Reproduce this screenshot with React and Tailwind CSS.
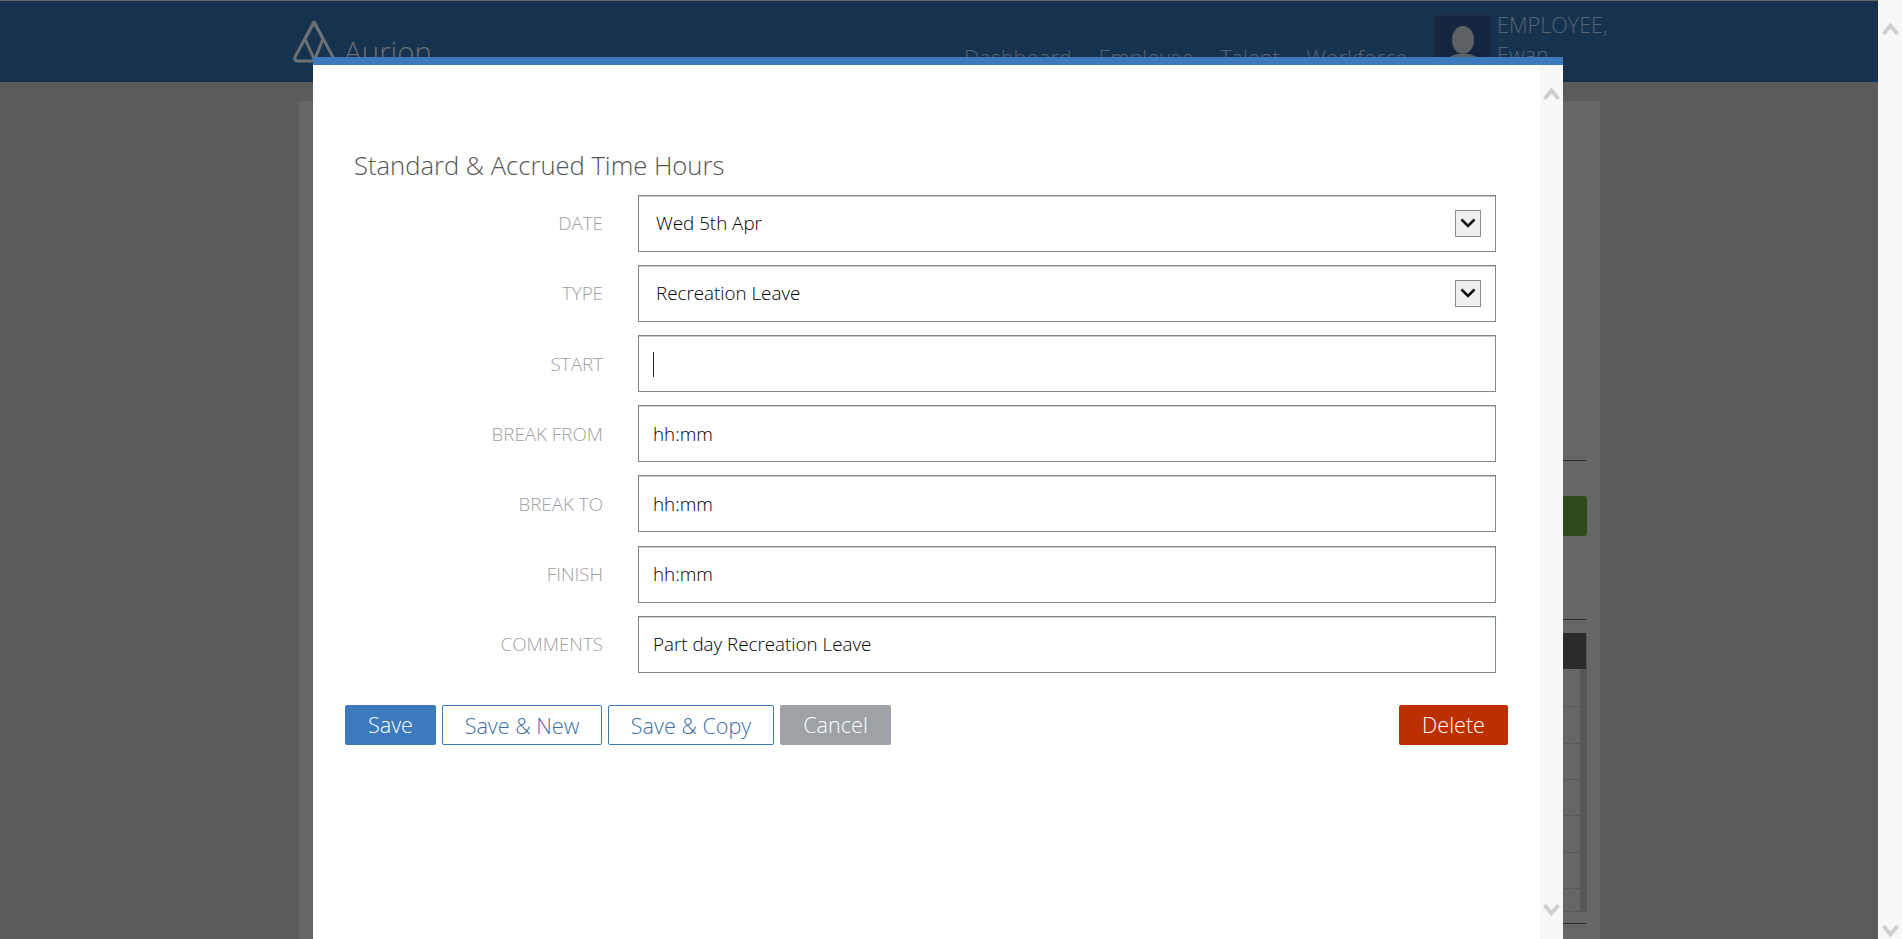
const font = { fontFamily: '"Open Sans", sans-serif' };

function Chevron({ up, className }) {
  return (
    <svg viewBox="0 0 17 12" className={className} fill="none" stroke="#cfcfcf" strokeWidth="3.8">
      <path d={up ? "M1.5 11 L8.5 2.5 L15.5 11" : "M1.5 1 L8.5 9.5 L15.5 1"} />
    </svg>
  );
}

function Field({ label, children, select }) {
  return (
    <div className="flex items-center">
      <div className="w-[290px] text-right text-[18.8px] font-light leading-6 text-[#a0a0a0]">{label}</div>
      <div className="ml-[35px] flex h-[57px] w-[858px] items-center border border-[#7f878b] pr-[14px] text-[18.8px] font-light leading-6 text-black shadow-[inset_0_1px_0_#c9cdcf]">
        <span className={select ? "pl-[17px] flex-1" : "pl-[14px] flex-1"}>{children}</span>
        {select && (
          <span className="flex h-[27px] w-[26px] items-center justify-center border border-[#8b8b8b] bg-[#efefef]">
            <svg viewBox="0 0 16 10" className="h-[10px] w-[16px]" fill="none" stroke="#111" strokeWidth="2.6">
              <path d="M1.5 1.5 L8 8 L14.5 1.5" />
            </svg>
          </span>
        )}
      </div>
    </div>
  );
}

function Scrollbar({ width, topPad, bottomPad, size }) {
  return (
    <div className={`flex h-full ${width} shrink-0 flex-col items-center justify-between bg-[#f8f8f8] ${topPad} ${bottomPad}`}>
      <Chevron up className={size} />
      <Chevron className={size} />
    </div>
  );
}

const rowHeights = ["h-[38px]", "h-[37px]", "h-[36px]", "h-[36px]", "h-[37px]", "h-[36px]", "h-[23px]"];

function PageBehind() {
  return (
    <div className="flex h-full flex-col bg-[#5b5b5b]">
      <header className="flex h-[82px] shrink-0 border-t border-[#62676b] bg-[#17324f] pl-[292px] text-[21.6px] font-light text-[#566473]">
        <div className="flex w-[140px] items-start pt-[19px]">
          <svg viewBox="0 0 44 44" className="h-[44px] w-[44px] shrink-0" fill="none" stroke="#6c7073" strokeWidth="3" strokeLinejoin="round">
            <path d="M22 2 L41 37 Q42 41 38 41 L6 41 Q2 41 3 37 Z" />
            <path d="M22 2 L31 19 L22 41 M13 19 L23 41 M13 19 L22 2" />
          </svg>
          <span className="ml-[8px] mt-[10px] text-[29.5px] font-light leading-[44px] text-[#6c7073]">Aurion</span>
        </div>
        <nav className="ml-[532px] flex w-[443px] justify-between pt-[43px] leading-7">
          <span>Dashboard</span>
          <span>Employee</span>
          <span>Talent</span>
          <span>Workforce</span>
        </nav>
        <div className="ml-[27px] mt-[14px] h-[56px] w-[57px] overflow-hidden border border-[#1c2a3a] bg-[#14263d]">
          <svg viewBox="0 0 57 56" className="h-[56px] w-[57px]" fill="#5c6166">
            <ellipse cx="28" cy="24" rx="11" ry="14" />
            <path d="M9 48 Q10 41 22 38 L34 38 Q46 41 47 48 Z" />
          </svg>
        </div>
        <div className="ml-[6px] mt-[9px] w-[125px] leading-[30px]">
          <div>EMPLOYEE,</div>
          <div>Ewan</div>
        </div>
      </header>
      <div className="ml-[299px] mt-[19px] flex w-[1301px] flex-1 flex-col items-end bg-[#666666] pr-[14px]">
        <div className="mt-[359px] h-px w-[30px] bg-[#2b2b2b]" />
        <div className="-mr-px mt-[35px] h-[40px] w-[31px] rounded-r-[3px] bg-[#2d4a1c]" />
        <div className="mt-[83px] h-px w-[30px] bg-[#2b2b2b]" />
        <div className="-mr-px mt-[13px] flex h-[279px] w-[31px] flex-col bg-[#575757]">
          <div className="mr-px h-[36px] shrink-0 bg-[#2a2b2d]" />
          {rowHeights.map((h, i) => (
            <div key={i} className={`${h} mr-[7px] shrink-0 border-b border-[#585858] bg-[#666666]`} />
          ))}
        </div>
        <div className="mt-[11px] h-px w-[30px] bg-[#2b2b2b]" />
      </div>
    </div>
  );
}

export default function App() {
  return (
    <div style={font} className="flex h-[939px] w-[1902px] overflow-hidden bg-white">
      <div className="relative h-full w-[1878px] shrink-0">
        <PageBehind />
        <div className="absolute left-[313px] top-[57px] flex h-[882px] w-[1250px] flex-col border-t-[8px] border-[#3a7abd] bg-white">
          <div className="flex min-h-0 flex-1">
            <div className="flex w-[1227px] flex-col">
              <h2 className="ml-[41px] mt-[85px] text-[25.6px] font-light leading-[32px] text-[#555]">
                Standard &amp; Accrued Time Hours
              </h2>
              <div className="mt-[12.8px] flex flex-col gap-[13.15px]">
                <Field label="DATE" select>Wed 5th Apr</Field>
                <Field label="TYPE" select>Recreation Leave</Field>
                <Field label="START">
                  <span className="inline-block h-[25px] w-px translate-y-[3px] bg-[#222]" />
                </Field>
                <Field label="BREAK FROM">hh:mm</Field>
                <Field label="BREAK TO">hh:mm</Field>
                <Field label="FINISH">hh:mm</Field>
                <Field label="COMMENTS">Part day Recreation Leave</Field>
              </div>
              <div className="ml-[32px] mr-[32px] mt-[32.3px] flex gap-[6px] text-[21.6px] font-light leading-[40px]">
                <button className="h-[40px] w-[91px] rounded-[2px] bg-[#3a7abd] text-white">Save</button>
                <button className="h-[40px] w-[160px] rounded-[2px] border border-[#3a7abd] bg-white text-[#3a6fa5]">Save &amp; New</button>
                <button className="h-[40px] w-[166px] rounded-[2px] border border-[#3a7abd] bg-white text-[#3a6fa5]">Save &amp; Copy</button>
                <button className="h-[40px] w-[111px] rounded-[2px] bg-[#9ea1a5] text-white">Cancel</button>
                <button className="ml-auto h-[40px] w-[109px] rounded-[2px] bg-[#bb2f00] text-white">Delete</button>
              </div>
            </div>
            <Scrollbar width="w-[23px]" topPad="pt-[23px]" bottomPad="pb-[23px]" size="h-[12px] w-[17px]" />
          </div>
        </div>
      </div>
      <Scrollbar width="w-[24px]" topPad="pt-[23px]" bottomPad="pb-[2px]" size="h-[12px] w-[17px]" />
    </div>
  );
}
